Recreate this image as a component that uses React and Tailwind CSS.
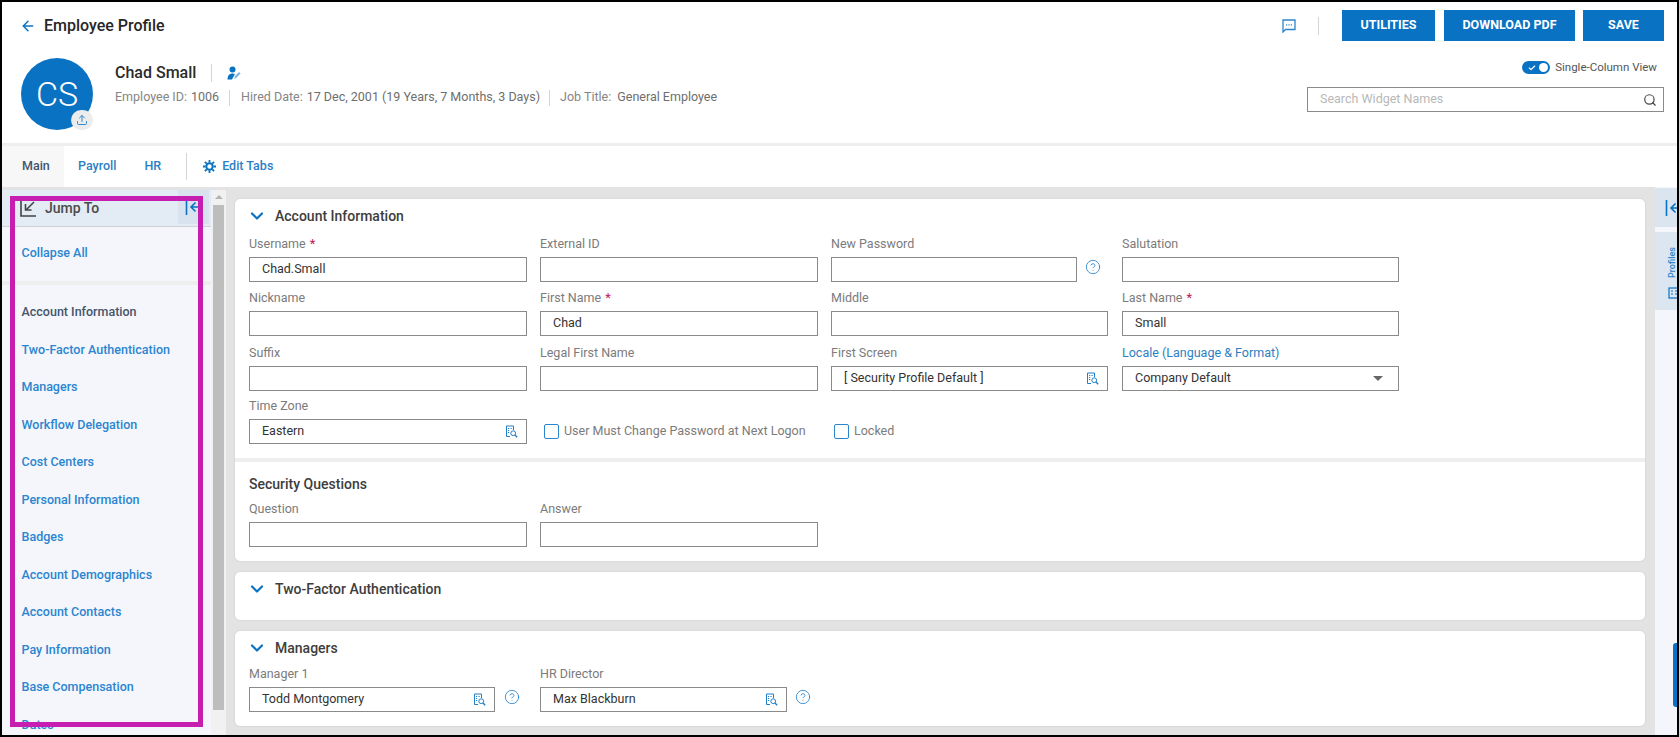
import React from 'react'
import { ArrowLeft, ChevronDown, CircleHelp, Search, Upload, Check } from 'lucide-react'

const JUMP_LINKS = [
  'Account Information',
  'Two-Factor Authentication',
  'Managers',
  'Workflow Delegation',
  'Cost Centers',
  'Personal Information',
  'Badges',
  'Account Demographics',
  'Account Contacts',
  'Pay Information',
  'Base Compensation',
  'Dates',
]

function LookupIcon() {
  return (
    <svg className="w-[13px] h-[13px] shrink-0" viewBox="0 0 13 13" fill="none" stroke="#1f7fc8" strokeWidth="1">
      <path d="M5 11.5H1.5V1h7v4" />
      <path d="M3 3.5h1.2M5.5 3.5h1.2M3 5.5h1.2M3 7.5h1.2" />
      <circle cx="8.2" cy="8.2" r="2.4" />
      <path d="M10 10l2.2 2.2" strokeWidth="1.4" />
    </svg>
  )
}

function CollapseIcon() {
  return (
    <svg className="w-[18px] h-[18px] shrink-0" viewBox="0 0 18 18" fill="none" stroke="#0a72c2" strokeWidth="1.6">
      <path d="M1.5 1v16" />
      <path d="M17 9H6M10.5 4.5L6 9l4.5 4.5" />
    </svg>
  )
}

function Label({ text, required, link }) {
  return (
    <div className="h-[28px] pt-[2px] flex items-center">
      <span className={`text-[12.5px] ${link ? 'text-[#2b7fc4]' : 'text-[#7b7b7b]'}`}>{text}</span>
      {required && <span className="ml-1 text-[13px] text-[#c2185b]">*</span>}
    </div>
  )
}

function Input({ value, lookup, width = 'w-[278px]' }) {
  return (
    <div className={`${width} h-[25px] flex items-center justify-between pl-[12px] pr-[8px] border border-[#8a8a8a] bg-white shrink-0`}>
      <span className="text-[12.5px] text-[#333]">{value}</span>
      {lookup && <LookupIcon />}
    </div>
  )
}

function Help() {
  return <CircleHelp size={16} strokeWidth={1.3} className="text-[#2b85cc] shrink-0 -mt-[5px]" />
}

function CardTitle({ children }) {
  return (
    <div className="h-[30px] pt-[4px] flex items-center">
      <ChevronDown size={20} strokeWidth={2.6} className="text-[#0a72c2] -ml-[2px] mr-[8px]" />
      <span className="text-[14px] font-medium text-[#3d3d3d]">{children}</span>
    </div>
  )
}

function Checkbox({ label, className }) {
  return (
    <div className={`flex items-center h-[25px] mt-[28px] ${className}`}>
      <span className="w-[15px] h-[15px] border border-[#2b85cc] rounded-[2px] bg-white" />
      <span className="ml-[5px] text-[12.5px] text-[#7b7b7b]">{label}</span>
    </div>
  )
}

export default function App() {
  return (
    <div className="relative w-[1679px] h-[737px] overflow-hidden flex flex-col border-2 border-black bg-white font-['Roboto',sans-serif]">
      {/* Header */}
      <div className="h-[141px] flex justify-between pl-[18px] pr-[13px]">
        <div>
          <div className="h-[46px] pt-[1px] flex items-center">
            <ArrowLeft size={16} strokeWidth={2.2} className="text-[#0a72c2]" />
            <span className="ml-[8px] text-[16px] font-medium text-[#262626]">Employee Profile</span>
          </div>
          <div className="mt-[10px] ml-[1px] flex">
            <div className="relative w-[72px] h-[72px] rounded-full bg-[#0a72c2] flex items-center justify-center">
              <span className="text-[34px] font-light text-white leading-none">CS</span>
              <span className="absolute right-0 bottom-0 w-[22px] h-[20px] rounded-full bg-[#ececec] flex items-center justify-center">
                <Upload size={12} strokeWidth={1.8} className="text-[#1f7fc8]" />
              </span>
            </div>
            <div className="ml-[22px] pt-[3px]">
              <div className="h-[24px] flex items-center">
                <span className="text-[16px] font-medium text-[#2b2b2b]">Chad Small</span>
                <span className="ml-[15px] w-px h-[18px] bg-[#d5d5d5]" />
                <svg className="ml-[15px] w-[14px] h-[14px]" viewBox="0 0 14 14">
                  <circle cx="5.5" cy="3.4" r="3" fill="#0a72c2" />
                  <path d="M0.5 13.5c0-4 2-6 5-6 1 0 1.8.2 2.4.6L5 13.5z" fill="#0a72c2" />
                  <path d="M7 13l1-3 4-4 1.6 1.6-4 4z" fill="#7fb5e0" />
                </svg>
              </div>
              <div className="h-[24px] pt-[1px] flex items-center text-[12.5px] text-[#6e6e6e]">
                <span className="text-[#858585]">Employee ID:</span>
                <span className="ml-1">1006</span>
                <span className="ml-[10px] mr-[11px] w-px h-[16px] bg-[#d5d5d5]" />
                <span className="text-[#858585]">Hired Date:</span>
                <span className="ml-1">17 Dec, 2001 (19 Years, 7 Months, 3 Days)</span>
                <span className="ml-[9px] mr-[10px] w-px h-[16px] bg-[#d5d5d5]" />
                <span className="text-[#858585]">Job Title:</span>
                <span className="ml-[6px]">General Employee</span>
              </div>
            </div>
          </div>
        </div>

        <div className="pt-[8px] flex flex-col items-end">
          <div className="flex items-center">
            <svg className="w-[14px] h-[14px]" viewBox="0 0 14 14" fill="none" stroke="#2b85cc" strokeWidth="1.3">
              <path d="M1 1h12v9.5H3.5L1 13z" />
              <path d="M4 5.8h1.2M6.4 5.8h1.2M8.8 5.8H10" />
            </svg>
            <span className="ml-[22px] mr-[23px] w-px h-[18px] bg-[#d5d5d5]" />
            <button className="w-[93px] h-[31px] bg-[#0a72c2] text-white text-[12.5px] font-bold">UTILITIES</button>
            <button className="ml-[9px] w-[131px] h-[31px] bg-[#0a72c2] text-white text-[12.5px] font-bold">DOWNLOAD PDF</button>
            <button className="ml-[8px] w-[81px] h-[31px] bg-[#0a72c2] text-white text-[12.5px] font-bold">SAVE</button>
          </div>
          <div className="mt-[20px] h-[13px] flex items-center pr-[7px]">
            <span className="w-[28px] h-[13px] rounded-full bg-[#0a72c2] flex items-center justify-between pl-[6px] pr-[2px]">
              <Check size={8} strokeWidth={3.5} className="text-white" />
              <span className="w-[9px] h-[9px] rounded-full bg-white" />
            </span>
            <span className="ml-[5px] text-[11.5px] text-[#555]">Single-Column View</span>
          </div>
          <div className="mt-[13px] w-[357px] h-[25px] border border-[#8a8a8a] flex items-center justify-between pl-[12px] pr-[6px]">
            <span className="text-[12.5px] text-[#b8b8b8]">Search Widget Names</span>
            <Search size={14} strokeWidth={2} className="text-[#444]" />
          </div>
        </div>
      </div>

      <div className="h-[3px] bg-[#eeeeee]" />

      {/* Tabs */}
      <div className="h-[41px] flex items-center text-[12.5px] font-medium text-[#2b7fc4]">
        <div className="w-[62px] h-full bg-[#f7f7f7] flex items-center pl-[20px] text-[#44546a]">Main</div>
        <span className="ml-[14px]">Payroll</span>
        <span className="ml-[28px]">HR</span>
        <span className="ml-[25px] w-px h-[27px] bg-[#d5d5d5]" />
        <svg className="ml-[16px] w-[13px] h-[13px]" viewBox="0 0 13 13" fill="none" stroke="#0a72c2">
          <circle cx="6.5" cy="6.5" r="3.2" strokeWidth="2" />
          <path d="M6.5 0v2.5M6.5 10.5V13M0 6.5h2.5M10.5 6.5H13M1.9 1.9l1.8 1.8M9.3 9.3l1.8 1.8M11.1 1.9L9.3 3.7M3.7 9.3l-1.8 1.8" strokeWidth="1.8" />
        </svg>
        <span className="ml-[6px]">Edit Tabs</span>
      </div>

      {/* Body */}
      <div className="flex-1 min-h-0 flex bg-[#e3e3e3]">
        <aside className="w-[209px] mt-[3px] bg-[#f4f6fb] overflow-hidden">
          <div className="h-[37px] bg-[#e3ebf5] border-b border-[#cfd3d8] flex items-start justify-between">
            <div className="h-[36px] flex items-center pl-[18px]">
              <svg className="w-[17px] h-[18px]" viewBox="0 0 17 18" fill="none" stroke="#444" strokeWidth="1.6">
                <path d="M1 2v15h15" />
                <path d="M14 3L6 11M5.5 5v6h6" />
              </svg>
              <span className="ml-[8px] text-[14px] font-medium text-[#4a4a4a]">Jump To</span>
            </div>
            <div className="w-[31px] h-[34px] mr-[2px] bg-[#d9e3f0] flex items-center pl-[7px]">
              <CollapseIcon />
            </div>
          </div>
          <div className="h-[54px] pb-[2px] flex items-center pl-[19.5px] text-[12.5px] font-medium text-[#2b85d0]">Collapse All</div>
          <div className="h-[4px] bg-[#eeeeee]" />
          <div className="pt-[9px] pl-[19.5px]">
            {JUMP_LINKS.map((name, i) => (
              <div key={name} className={`h-[37.5px] flex items-center text-[12.5px] font-medium ${i === 0 ? 'text-[#44546a]' : 'text-[#2b85d0]'}`}>
                {name}
              </div>
            ))}
          </div>
        </aside>

        {/* Sidebar scrollbar */}
        <div className="w-[15px] mt-[3px] bg-[#f1f1f1] flex flex-col items-center">
          <span className="mt-[5px] w-0 h-0 border-x-[4px] border-x-transparent border-b-[4px] border-b-[#b5b5b5]" />
          <span className="mt-[6px] w-[11px] h-[505px] bg-[#bdbdbd]" />
        </div>

        <main className="flex-1 min-w-0 pl-[9px] pr-[10px] pt-[12px] flex flex-col gap-[11px]">
          {/* Account Information */}
          <section className="h-[362px] bg-white rounded-[5px] shadow-[0_0_2px_#c4c4c4]">
            <div className="h-[259px] px-[14px]">
              <CardTitle>Account Information</CardTitle>
              <div className="grid grid-cols-[291px_291px_291px_277px]">
                <div>
                  <Label text="Username" required />
                  <Input value="Chad.Small" />
                </div>
                <div>
                  <Label text="External ID" />
                  <Input />
                </div>
                <div>
                  <Label text="New Password" />
                  <div className="flex items-center gap-[8px]">
                    <Input width="w-[246px]" />
                    <Help />
                  </div>
                </div>
                <div>
                  <Label text="Salutation" />
                  <Input width="w-[277px]" />
                </div>

                <div className="mt-[1px]">
                  <Label text="Nickname" />
                  <Input />
                </div>
                <div className="mt-[1px]">
                  <Label text="First Name" required />
                  <Input value="Chad" />
                </div>
                <div className="mt-[1px]">
                  <Label text="Middle" />
                  <Input width="w-[277px]" />
                </div>
                <div className="mt-[1px]">
                  <Label text="Last Name" required />
                  <Input value="Small" width="w-[277px]" />
                </div>

                <div className="mt-[2px]">
                  <Label text="Suffix" />
                  <Input />
                </div>
                <div className="mt-[2px]">
                  <Label text="Legal First Name" />
                  <Input />
                </div>
                <div className="mt-[2px]">
                  <Label text="First Screen" />
                  <Input value="[ Security Profile Default ]" lookup width="w-[277px]" />
                </div>
                <div className="mt-[2px]">
                  <Label text="Locale (Language & Format)" link />
                  <div className="w-[277px] h-[25px] flex items-center justify-between pl-[12px] pr-[15px] border border-[#8a8a8a]">
                    <span className="text-[12.5px] text-[#333]">Company Default</span>
                    <span className="w-0 h-0 border-x-[5px] border-x-transparent border-t-[5px] border-t-[#666]" />
                  </div>
                </div>

                <div>
                  <Label text="Time Zone" />
                  <Input value="Eastern" lookup />
                </div>
                <Checkbox label="User Must Change Password at Next Logon" className="ml-[4px]" />
                <Checkbox label="Locked" className="ml-[3px]" />
              </div>
            </div>
            <div className="h-[4px] bg-[#eeeeee]" />
            <div className="px-[14px] pt-[10px]">
              <div className="h-[24px] flex items-center text-[14px] font-medium text-[#3d3d3d]">Security Questions</div>
              <div className="flex -mt-[2px]">
                <div className="w-[291px]">
                  <Label text="Question" />
                  <Input />
                </div>
                <div>
                  <Label text="Answer" />
                  <Input />
                </div>
              </div>
            </div>
          </section>

          {/* Two-Factor Authentication */}
          <section className="h-[48px] px-[14px] bg-white rounded-[5px] shadow-[0_0_2px_#c4c4c4]">
            <CardTitle>Two-Factor Authentication</CardTitle>
          </section>

          {/* Managers */}
          <section className="h-[95px] px-[14px] bg-white rounded-[5px] shadow-[0_0_2px_#c4c4c4]">
            <CardTitle>Managers</CardTitle>
            <div className="flex -mt-[2px]">
              <div className="w-[291px]">
                <Label text="Manager 1" />
                <div className="flex items-center gap-[9px]">
                  <Input value="Todd Montgomery" lookup width="w-[246px]" />
                  <Help />
                </div>
              </div>
              <div>
                <Label text="HR Director" />
                <div className="flex items-center gap-[8px]">
                  <Input value="Max Blackburn" lookup width="w-[247px]" />
                  <Help />
                </div>
              </div>
            </div>
          </section>
        </main>

        {/* Right rail, its icons run off the window edge */}
        <div className="w-[22px] bg-[#f4f6fb] flex flex-col overflow-hidden">
          <div className="mt-[1px] h-[39px] bg-[#dbe5f0] flex items-center pl-[10px]">
            <CollapseIcon />
          </div>
          <div className="mt-[5px] h-[78px] bg-[#dce6f1] relative overflow-hidden">
            <span className="absolute left-[2px] top-[25px] w-[30px] h-[12px] -rotate-90 text-[9px] leading-[12px] font-medium text-[#2b85cc] text-center">Profiles</span>
            <svg className="absolute left-[13px] top-[55px] w-[14px] h-[12px]" viewBox="0 0 14 12" fill="none" stroke="#0a72c2" strokeWidth="1.2">
              <rect x="1" y="1" width="11" height="10" />
              <path d="M3 4h2M7 4h2M3 7h2M7 7h2" />
            </svg>
          </div>
          <div className="mt-[333px] self-end w-[4px] h-[64px] bg-[#0a72c2] rounded-l-[3px]" />
        </div>
      </div>

      {/* Annotation box drawn over the Jump To panel */}
      <div className="absolute left-[8px] top-[194px] w-[193px] h-[531px] border-[5px] border-[#c61eb1]" />
    </div>
  )
}
